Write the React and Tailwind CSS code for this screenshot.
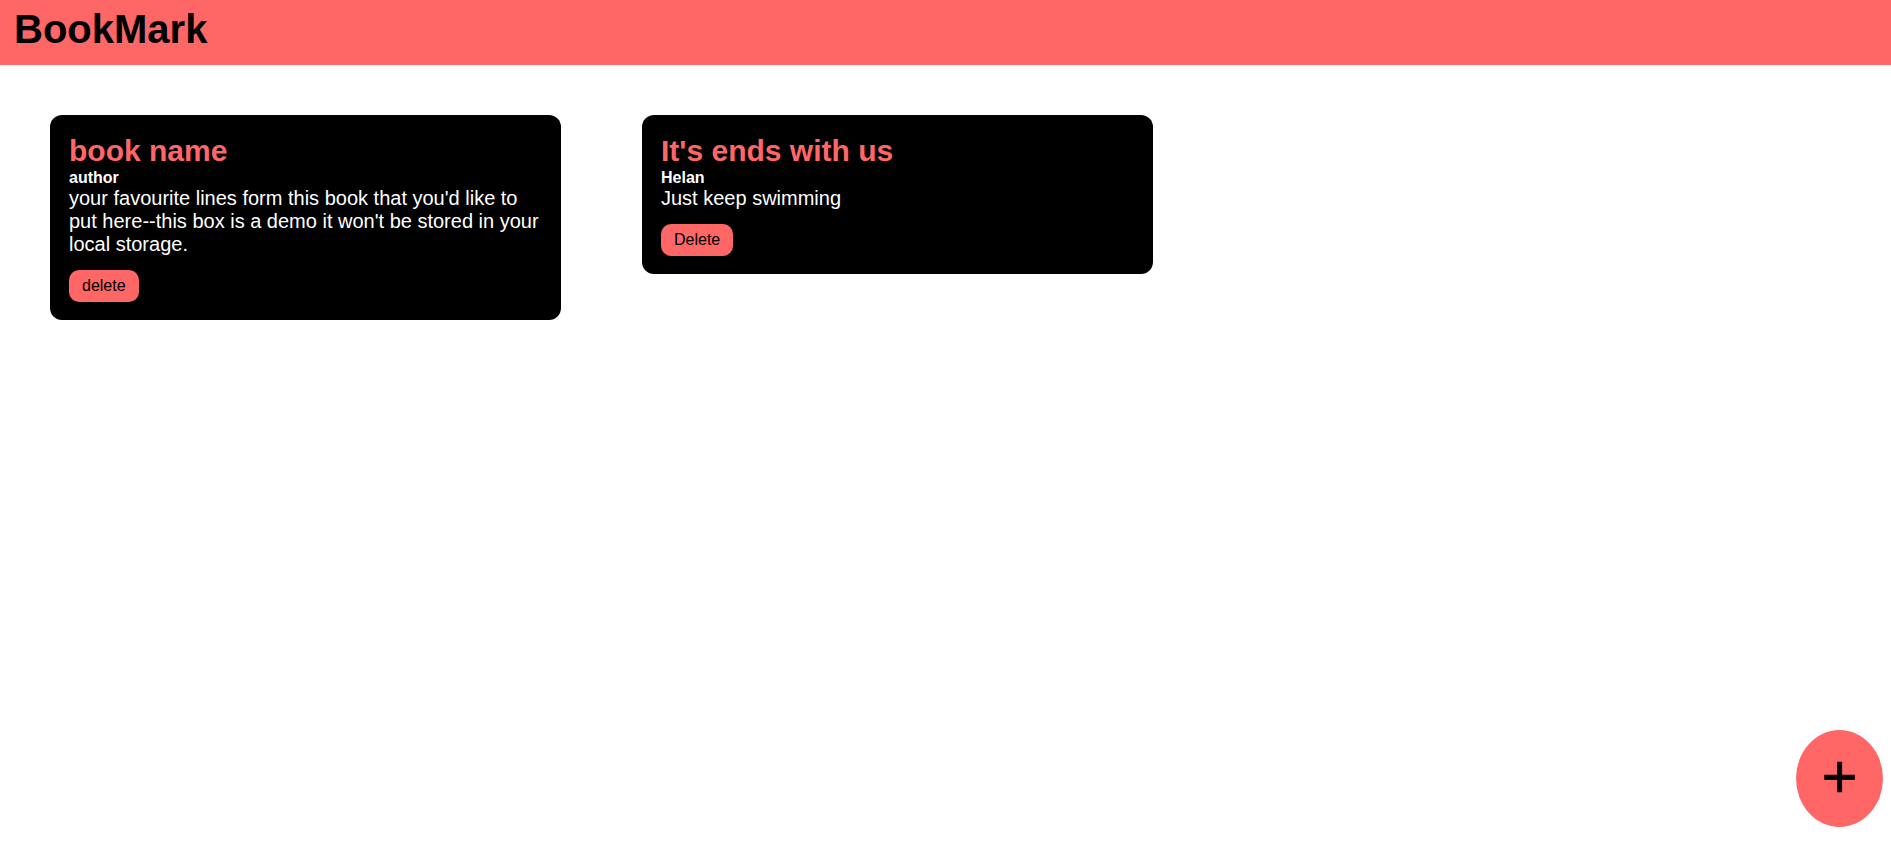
export default function App() {
  const cards = [
    {
      title: "book name",
      author: "author",
      lines:
        "your favourite lines form this book that you'd like to put here--this box is a demo it won't be stored in your local storage.",
      btn: "delete",
    },
    {
      title: "It's ends with us",
      author: "Helan",
      lines: "Just keep swimming",
      btn: "Delete",
    },
  ];
  return (
    <div
      className="min-h-screen bg-white"
      style={{ fontFamily: '"Liberation Sans", Arial, sans-serif' }}
    >
      <header className="h-[65px] bg-[#ff6666] pl-[14px] pt-[7px]">
        <h1 className="text-[40px] font-bold leading-[45px] text-black">BookMark</h1>
      </header>
      <main className="flex items-start gap-[81px] pl-[50px] pt-[50px]">
        {cards.map((c) => (
          <div
            key={c.title}
            className="w-[511px] rounded-[12px] bg-black px-[19px] pt-[18px] pb-[18px]"
          >
            <h2 className="text-[30px] font-bold leading-[35px] text-[#ff6666]">{c.title}</h2>
            <h4 className="text-[16px] font-bold leading-[19px] text-white">{c.author}</h4>
            <p className="text-[20px] leading-[23px] text-white">{c.lines}</p>
            <button className="mt-[14px] rounded-[10px] bg-[#ff6666] px-[13px] py-[7px] text-[16px] leading-[18.4px] text-black">
              {c.btn}
            </button>
          </div>
        ))}
      </main>
      <button className="fixed bottom-[15px] right-[8px] flex h-[97px] w-[87px] items-center justify-center rounded-[50%] bg-[#ff6666] text-[62px] font-normal leading-none text-black [-webkit-text-stroke:0.6px_black]">
        <span className="translate-y-[-3px]">+</span>
      </button>
    </div>
  );
}
